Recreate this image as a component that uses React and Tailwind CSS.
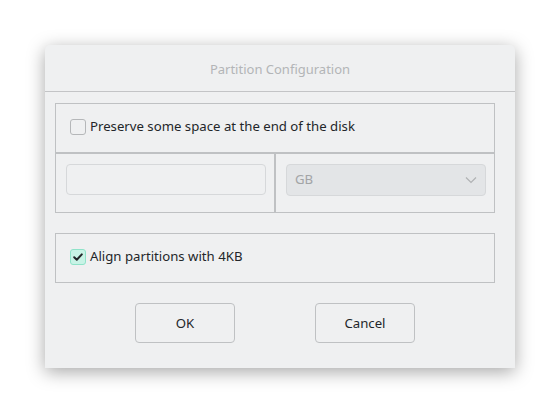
import React from "react";

function Check({ checked }) {
  return checked ? (
    <div className="w-4 h-4 rounded-[3px] border border-[#8fe3c9] bg-[#c8f3e6] flex items-center justify-center">
      <svg width="12" height="12" viewBox="0 0 12 12">
        <path d="M2.2 6.2 L4.8 8.8 L9.8 3.4" fill="none" stroke="#232629" strokeWidth="2" strokeLinecap="round" strokeLinejoin="round" />
      </svg>
    </div>
  ) : (
    <div className="w-4 h-4 rounded-[3px] border border-[#b5b7b9] bg-[#eff0f1]" />
  );
}

export default function App() {
  return (
    <div className="w-[560px] h-[413px] bg-white pt-[45px] pl-[45px]" style={{ fontFamily: '"Noto Sans", sans-serif' }}>
      <div className="w-[470px] h-[323px] bg-[#eff0f1] rounded-t-[5px] shadow-[0_4px_18px_rgba(0,0,0,0.35)] flex flex-col text-[13.2px] text-[#232629]">
        <div className="h-[47px] pt-[3px] flex items-center justify-center text-[13px] text-[#b3b5b7] border-b border-[#c3c4c6]">
          Partition Configuration
        </div>
        <div className="px-[10px] pt-[11px] flex flex-col w-[460px]">
          <div className="flex flex-col w-[440px]">
            <div className="h-[50px] border border-[#bfc1c3] flex items-center pl-[14px] gap-[4px] pb-[2px]">
              <Check checked={false} />
              <span>Preserve some space at the end of the disk</span>
            </div>
            <div className="flex h-[60px]">
              <div className="w-[220px] border border-[#bfc1c3] pl-[10px] pr-[8px] pt-[10px]">
                <div className="h-[31px] rounded-[4px] border border-[#d6d8da] bg-[#eff0f1]" />
              </div>
              <div className="w-[220px] border border-[#bfc1c3] pl-[10px] pr-[8px] pt-[10px]">
                <div className="h-[32px] rounded-[4px] border border-[#d6d8da] bg-[#e3e5e7] flex items-center justify-between pl-[8px] pr-[8px] text-[#a2a4a6]">
                  <span>GB</span>
                  <svg width="12" height="8" viewBox="0 0 12 8">
                    <path d="M1 1.5 L6 6.5 L11 1.5" fill="none" stroke="#b0b2b4" strokeWidth="1.2" />
                  </svg>
                </div>
              </div>
            </div>
          </div>
          <div className="mt-[20px] w-[440px] h-[50px] border border-[#bfc1c3] flex items-center pl-[14px] gap-[4px] pb-[2px]">
            <Check checked={true} />
            <span>Align partitions with 4KB</span>
          </div>
          <div className="mt-[20px] flex pl-[80px] gap-[80px]">
            <div className="w-[100px] h-[40px] pt-[1px] rounded-[4px] border border-[#bfc1c3] bg-[#eff0f1] flex items-center justify-center">OK</div>
            <div className="w-[100px] h-[40px] pt-[1px] rounded-[4px] border border-[#bfc1c3] bg-[#eff0f1] flex items-center justify-center">Cancel</div>
          </div>
        </div>
      </div>
    </div>
  );
}
